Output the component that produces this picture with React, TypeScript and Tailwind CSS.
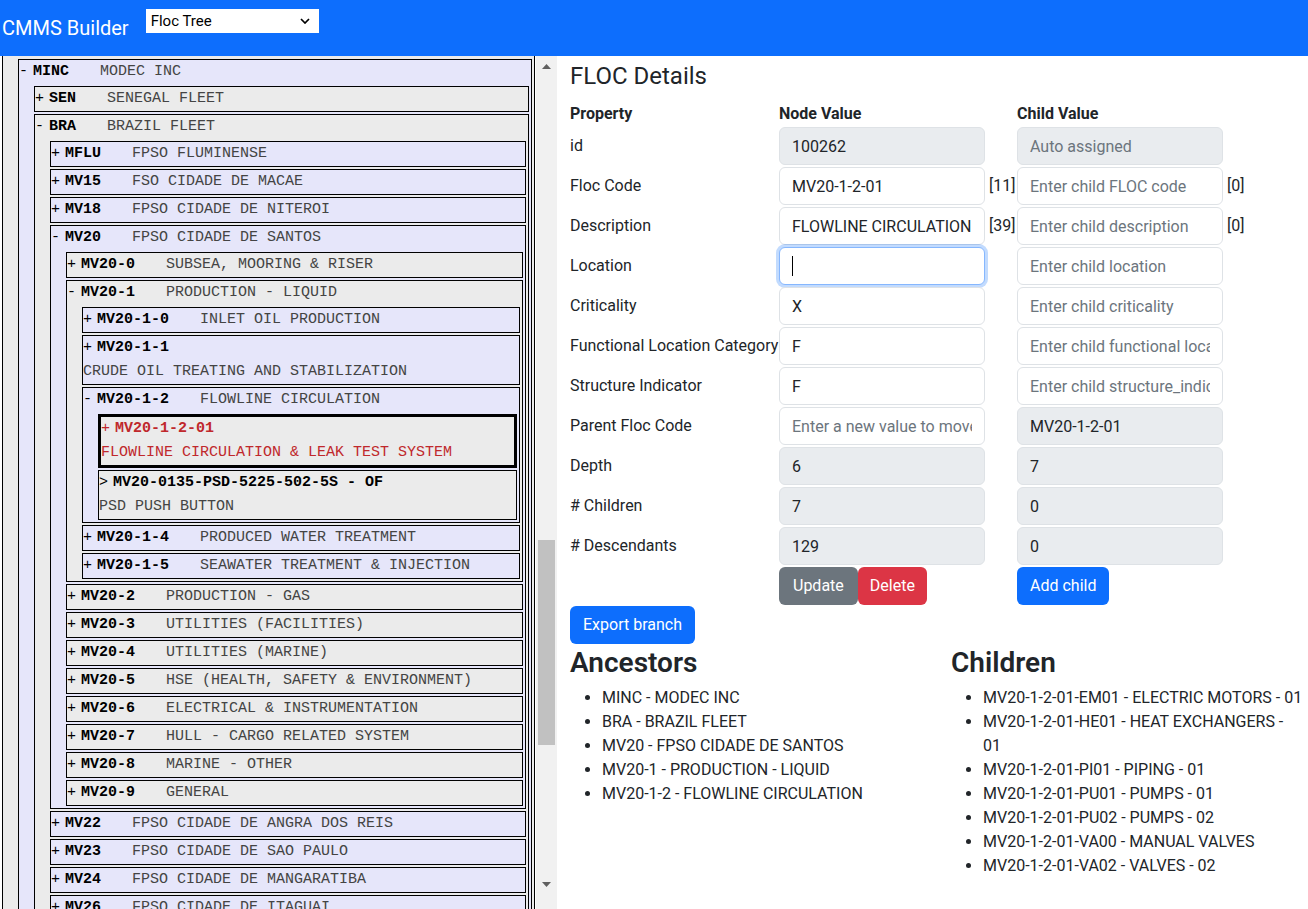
import { useState } from 'react';

type FlocNode = {
  code: string;
  desc: string;
  mark: string;
  selected?: boolean;
  kids?: FlocNode[];
};

const leaf = (code: string, desc: string): FlocNode => ({ code, desc, mark: '+' });

// Árvore parcialmente expandida até o nó selecionado.
const tree: FlocNode = {
  code: 'MINC',
  desc: 'MODEC INC',
  mark: '-',
  kids: [
    leaf('SEN', 'SENEGAL FLEET'),
    {
      code: 'BRA',
      desc: 'BRAZIL FLEET',
      mark: '-',
      kids: [
        leaf('MFLU', 'FPSO FLUMINENSE'),
        leaf('MV15', 'FSO CIDADE DE MACAE'),
        leaf('MV18', 'FPSO CIDADE DE NITEROI'),
        {
          code: 'MV20',
          desc: 'FPSO CIDADE DE SANTOS',
          mark: '-',
          kids: [
            leaf('MV20-0', 'SUBSEA, MOORING & RISER'),
            {
              code: 'MV20-1',
              desc: 'PRODUCTION - LIQUID',
              mark: '-',
              kids: [
                leaf('MV20-1-0', 'INLET OIL PRODUCTION'),
                leaf('MV20-1-1', 'CRUDE OIL TREATING AND STABILIZATION'),
                {
                  code: 'MV20-1-2',
                  desc: 'FLOWLINE CIRCULATION',
                  mark: '-',
                  kids: [
                    { ...leaf('MV20-1-2-01', 'FLOWLINE CIRCULATION & LEAK TEST SYSTEM'), selected: true },
                    { code: 'MV20-0135-PSD-5225-502-5S - OF', desc: 'PSD PUSH BUTTON', mark: '>' },
                  ],
                },
                leaf('MV20-1-4', 'PRODUCED WATER TREATMENT'),
                leaf('MV20-1-5', 'SEAWATER TREATMENT & INJECTION'),
              ],
            },
            leaf('MV20-2', 'PRODUCTION - GAS'),
            leaf('MV20-3', 'UTILITIES (FACILITIES)'),
            leaf('MV20-4', 'UTILITIES (MARINE)'),
            leaf('MV20-5', 'HSE (HEALTH, SAFETY & ENVIRONMENT)'),
            leaf('MV20-6', 'ELECTRICAL & INSTRUMENTATION'),
            leaf('MV20-7', 'HULL - CARGO RELATED SYSTEM'),
            leaf('MV20-8', 'MARINE - OTHER'),
            leaf('MV20-9', 'GENERAL'),
          ],
        },
        leaf('MV22', 'FPSO CIDADE DE ANGRA DOS REIS'),
        leaf('MV23', 'FPSO CIDADE DE SAO PAULO'),
        leaf('MV24', 'FPSO CIDADE DE MANGARATIBA'),
        leaf('MV26', 'FPSO CIDADE DE ITAGUAI'),
        leaf('MV27', 'FPSO CIDADE DE ILHABELA'),
      ],
    },
  ],
};

type Cell = { value?: string; placeholder?: string; locked?: boolean; focused?: boolean; count?: string };

const rows: { label: string; node: Cell; child: Cell }[] = [
  { label: 'id', node: { value: '100262', locked: true }, child: { placeholder: 'Auto assigned', locked: true } },
  { label: 'Floc Code', node: { value: 'MV20-1-2-01', count: '[11]' }, child: { placeholder: 'Enter child FLOC code', count: '[0]' } },
  {
    label: 'Description',
    node: { value: 'FLOWLINE CIRCULATION & LEAK TEST SYSTEM', count: '[39]' },
    child: { placeholder: 'Enter child description', count: '[0]' },
  },
  { label: 'Location', node: { value: '', focused: true }, child: { placeholder: 'Enter child location' } },
  { label: 'Criticality', node: { value: 'X' }, child: { placeholder: 'Enter child criticality' } },
  {
    label: 'Functional Location Category',
    node: { value: 'F' },
    child: { placeholder: 'Enter child functional location_category' },
  },
  { label: 'Structure Indicator', node: { value: 'F' }, child: { placeholder: 'Enter child structure_indicator' } },
  {
    label: 'Parent Floc Code',
    node: { placeholder: 'Enter a new value to move this node' },
    child: { value: 'MV20-1-2-01', locked: true },
  },
  { label: 'Depth', node: { value: '6', locked: true }, child: { value: '7', locked: true } },
  { label: '# Children', node: { value: '7', locked: true }, child: { value: '0', locked: true } },
  { label: '# Descendants', node: { value: '129', locked: true }, child: { value: '0', locked: true } },
];

const ancestors = [
  'MINC - MODEC INC',
  'BRA - BRAZIL FLEET',
  'MV20 - FPSO CIDADE DE SANTOS',
  'MV20-1 - PRODUCTION - LIQUID',
  'MV20-1-2 - FLOWLINE CIRCULATION',
];

const children = [
  'MV20-1-2-01-EM01 - ELECTRIC MOTORS - 01',
  'MV20-1-2-01-HE01 - HEAT EXCHANGERS - 01',
  'MV20-1-2-01-PI01 - PIPING - 01',
  'MV20-1-2-01-PU01 - PUMPS - 01',
  'MV20-1-2-01-PU02 - PUMPS - 02',
  'MV20-1-2-01-VA00 - MANUAL VALVES',
  'MV20-1-2-01-VA02 - VALVES - 02',
];

function Navbar() {
  const [view, setView] = useState('tree');
  return (
    <div className="flex h-[56px] shrink-0 items-start bg-[#0d6efd]">
      <div className="pl-[2px] pt-[13px] text-[20px] leading-[30px] text-white">CMMS Builder</div>
      <div className="relative ml-[17px] mt-[9px]">
        <select
          value={view}
          onChange={(e) => setView(e.target.value)}
          className="block h-[24px] w-[173px] appearance-none bg-white pl-[5px] text-[15px] leading-[22px] text-black outline-none"
        >
          <option value="tree">Floc Tree</option>
          <option value="list">Floc List</option>
        </select>
        <svg className="pointer-events-none absolute right-[9px] top-[9px]" width="10" height="6" viewBox="0 0 10 6">
          <path d="M1 1l4 4 4-4" fill="none" stroke="#000" strokeWidth="1.7" />
        </svg>
      </div>
    </div>
  );
}

// Caixa aninhada do nó: profundidade ímpar em lavanda, par em cinza.
function FlocBox({ node, depth }: { node: FlocNode; depth: number }) {
  const bg = depth % 2 === 1 ? 'bg-[#e6e6fa]' : 'bg-[#ebebeb]';
  const frame = node.selected ? 'border-[3px]' : 'border';
  const codeColor = node.selected ? 'text-[#c0282c]' : 'text-black';
  const descColor = node.selected ? 'text-[#c0282c]' : 'text-[#444]';
  return (
    <div className={`${bg} ${frame} border-black`}>
      <div className="leading-[24px]">
        <span className={`inline-block w-[14px] ${codeColor}`}>{node.mark}</span>
        <b className={`pr-[22px] ${codeColor}`}>{node.code}</b>{' '}
        <span className={`inline-block ${descColor}`}>{node.desc}</span>
      </div>
      {node.kids && (
        <div className="pb-[2px] pl-[15px] pr-[2px]">
          {node.kids.map((k) => (
            <div key={k.code} className="mt-[2px]">
              <FlocBox node={k} depth={depth + 1} />
            </div>
          ))}
        </div>
      )}
    </div>
  );
}

function Scrollbar() {
  return (
    <div className="flex w-[21px] shrink-0 flex-col bg-[#f1f1f1]">
      <div className="flex h-[21px] items-center justify-center">
        <svg width="9" height="5" viewBox="0 0 9 5">
          <polygon points="0,5 4.5,0 9,5" fill="#606060" />
        </svg>
      </div>
      <div className="flex-1 px-[2px]">
        <div className="h-[463px]" />
        <div className="h-[205px] bg-[#c1c1c1]" />
      </div>
      <div className="flex h-[21px] items-center justify-center">
        <svg width="9" height="5" viewBox="0 0 9 5">
          <polygon points="0,0 4.5,5 9,0" fill="#606060" />
        </svg>
      </div>
      <div className="h-[14px]" />
    </div>
  );
}

function TreePane() {
  return (
    <div className="flex w-[557px] shrink-0">
      <div className="w-[536px] overflow-hidden pl-[2px] pr-[1px] font-['Liberation_Mono',monospace] text-[15px]">
        <div className="border-x border-black bg-[#ebebeb] pl-[15px] pr-[2px] pt-[1px]">
          <div className="mt-[2px]">
            <FlocBox node={tree} depth={1} />
          </div>
        </div>
      </div>
      <Scrollbar />
    </div>
  );
}

function Field({ cell }: { cell: Cell }) {
  const look = cell.locked
    ? 'bg-[#e9ecef] border-[#dee2e6]'
    : cell.focused
      ? 'bg-white border-[#86b7fe] shadow-[0_0_0_3px_rgba(13,110,253,0.25)]'
      : 'bg-white border-[#dee2e6]';
  return (
    <div className="flex items-center">
      <div className="relative">
        <input
          readOnly
          value={cell.value ?? ''}
          placeholder={cell.placeholder}
          className={`block h-[38px] w-[206px] rounded-[6px] border px-[12px] text-[16px] text-[#212529] outline-none placeholder:text-[#6c757d] ${look}`}
        />
        {cell.focused && <span className="absolute left-[13px] top-[9px] h-[20px] w-px bg-black" />}
      </div>
      {cell.count && <span className="ml-[4px] text-[16px]">{cell.count}</span>}
    </div>
  );
}

function Btn({ tone, children }: { tone: string; children: string }) {
  return (
    <button className={`h-[38px] rounded-[6px] text-[16px] leading-[24px] text-white ${tone}`}>{children}</button>
  );
}

function DetailsPane() {
  return (
    <div className="min-w-0 flex-1 pl-[13px] pt-[6px] text-[16px] leading-[24px]">
      <h4 className="mb-[11px] text-[24px] leading-[29px]">FLOC Details</h4>
      <div className="flex h-[24px] font-bold">
        <div className="w-[209px]">Property</div>
        <div className="w-[238px]">Node Value</div>
        <div>Child Value</div>
      </div>
      {rows.map((r) => (
        <div key={r.label} className="flex h-[40px] items-center">
          <div className="w-[209px] whitespace-nowrap">{r.label}</div>
          <div className="w-[238px]">
            <Field cell={r.node} />
          </div>
          <Field cell={r.child} />
        </div>
      ))}
      <div className="flex h-[40px] items-center">
        <div className="w-[209px]" />
        <div className="flex w-[238px]">
          <Btn tone="bg-[#6c757d] px-[14px]">Update</Btn>
          <Btn tone="bg-[#dc3545] px-[12px]">Delete</Btn>
        </div>
        <Btn tone="bg-[#0d6efd] px-[13px]">Add child</Btn>
      </div>
      <Btn tone="bg-[#0d6efd] px-[13px]">Export branch</Btn>
      <div className="flex">
        <div className="w-[381px]">
          <h3 className="mb-[6px] mt-[2px] text-[28px] font-semibold leading-[34px]">Ancestors</h3>
          <ul className="list-disc pl-[32px]">
            {ancestors.map((a) => (
              <li key={a}>{a}</li>
            ))}
          </ul>
        </div>
        <div className="w-[354px]">
          <h3 className="mb-[6px] mt-[2px] text-[28px] font-semibold leading-[34px]">Children</h3>
          <ul className="list-disc pl-[32px]">
            {children.map((c) => (
              <li key={c}>{c}</li>
            ))}
          </ul>
        </div>
      </div>
    </div>
  );
}

export default function App() {
  return (
    <div className="flex h-[909px] w-[1308px] flex-col overflow-hidden bg-white font-['Roboto',sans-serif] text-[#212529]">
      <Navbar />
      <div className="flex min-h-0 flex-1">
        <TreePane />
        <DetailsPane />
      </div>
    </div>
  );
}
